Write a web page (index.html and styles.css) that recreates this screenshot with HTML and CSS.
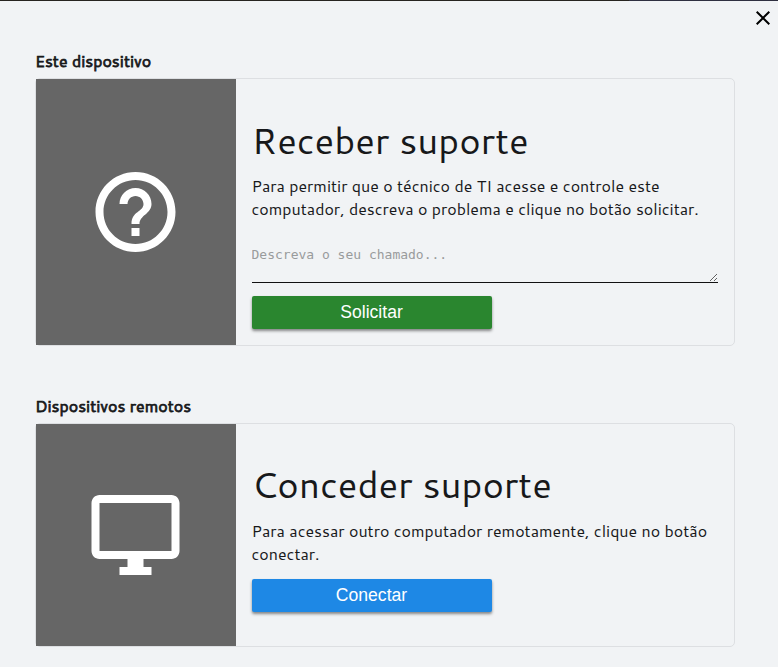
FILE: index.html
```html
<!DOCTYPE html>
<html lang="pt-BR">
<head>
<meta charset="utf-8">
<title>Suporte</title>
<link rel="stylesheet" href="styles.css">
</head>
<body>
<header class="topbar">
  <button class="close" aria-label="Fechar">
    <svg width="24" height="24" viewBox="0 0 24 24"><path d="M19 6.41 17.59 5 12 10.59 6.41 5 5 6.41 10.59 12 5 17.59 6.41 19 12 13.41 17.59 19 19 17.59 13.41 12z"/></svg>
  </button>
</header>
<main class="page">
  <section>
    <h2 class="label">Este dispositivo</h2>
    <div class="card card-request">
      <div class="media">
        <svg width="96" height="96" viewBox="0.125 0 24 24"><path d="M11 18h2v-2h-2v2zm1-16C6.48 2 2 6.48 2 12s4.480 10 10 10 10-4.480 10-10S17.520 2 12 2zm0 18c-4.410 0-8-3.590-8-8s3.590-8 8-8 8 3.590 8 8-3.590 8-8 8zm0-14c-2.210 0-4 1.790-4 4h2c0-1.100.9-2 2-2s2 .9 2 2c0 2-3 1.750-3 5h2c0-2.250 3-2.500 3-5 0-2.210-1.790-4-4-4z"/></svg>
      </div>
      <div class="content">
        <h1 class="title title-request">Receber suporte</h1>
        <p class="text">Para permitir que o técnico de TI acesse e controle este<br>computador, descreva o problema e clique no botão solicitar.</p>
        <textarea class="field" placeholder="Descreva o seu chamado..."></textarea>
        <button class="btn btn-green">Solicitar</button>
      </div>
    </div>
  </section>
  <section>
    <h2 class="label">Dispositivos remotos</h2>
    <div class="card card-connect">
      <div class="media">
        <svg width="96" height="96" viewBox="0.125 0 24 24"><path d="M21 2H3c-1.100 0-2 .9-2 2v12c0 1.100.9 2 2 2h7v2H8v2h8v-2h-2v-2h7c1.100 0 2-.9 2-2V4c0-1.100-.9-2-2-2zm0 14H3V4h18v12z"/></svg>
      </div>
      <div class="content">
        <h1 class="title">Conceder suporte</h1>
        <p class="text">Para acessar outro computador remotamente, clique no botão<br>conectar.</p>
        <button class="btn btn-blue">Conectar</button>
      </div>
    </div>
  </section>
</main>
</body>
</html>
```
FILE: styles.css
```css
* { box-sizing: border-box; }
body {
  margin: 0;
  height: 667px;
  overflow: hidden;
  background: #f1f3f5;
  color: #17181a;
  font-family: Cantarell, Lato, sans-serif;
  font-size: 16px;
}
.topbar {
  display: flex;
  justify-content: flex-end;
  height: 50px;
  padding: 6px 3px 0 0;
  background: linear-gradient(90deg, #272420 629px, #2f2f40 629px) top / 100% 1px no-repeat;
}
.close { width: 24px; height: 24px; padding: 0; border: 0; background: none; }
.close svg { display: block; }
.page { width: 700px; margin-left: 34.5px; }
.label {
  margin: 0;
  padding-left: 0.4px;
  height: 28px;
  font-size: 16px;
  font-weight: 400;
  line-height: 21px;
  white-space: nowrap;
  -webkit-text-stroke: 0.75px #17181a;
}
.card {
  display: flex;
  border: 1px solid #dddfe2;
  border-radius: 5px;
}
.card-request { height: 268px; margin-bottom: 49px; }
.card-connect { height: 224px; }
.media {
  display: flex;
  flex: 0 0 200px;
  align-items: center;
  justify-content: center;
  background: #666;
  fill: #fff;
}
.content { width: 498px; padding: 35px 16px 0; }
.title {
  margin: 0;
  height: 60px;
  font-size: 36.5px;
  font-weight: 400;
  line-height: 51px;
  white-space: nowrap;
}
.title-request { line-height: 53px; }
.text { margin: 0; line-height: 23px; white-space: nowrap; }
.field {
  display: block;
  width: 466px;
  height: 36px;
  margin: 27px 0 13px;
  padding: 0;
  border: 0;
  border-bottom: 1px solid #111;
  background: transparent;
  font: 13px/15px "DejaVu Sans Mono", monospace;
}
.field::placeholder { color: #999b9c; }
.btn {
  display: block;
  width: 240px;
  height: 33px;
  padding: 0;
  border: 0;
  border-radius: 2px;
  box-shadow: 0 2px 3px rgba(0, 0, 0, .45);
  color: #fff;
  font: 17.6px "Liberation Sans", sans-serif;
}
.btn-green { background: #2a862f; }
.btn-blue { margin-top: 14px; background: #1e88e5; }
```
